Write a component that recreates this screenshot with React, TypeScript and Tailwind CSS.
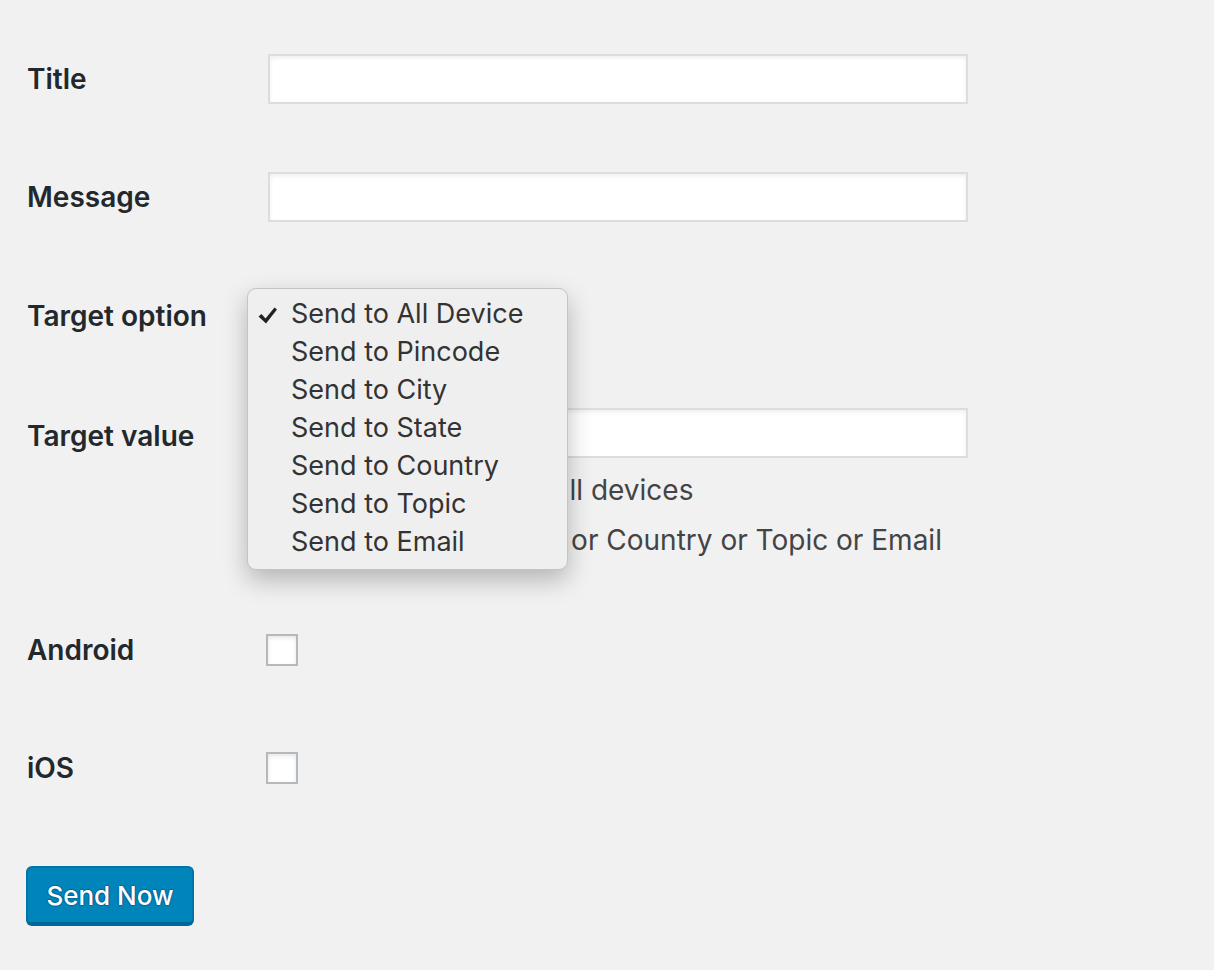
import React from "react";

const font = { fontFamily: "Inter, 'Noto Sans', sans-serif" };

function TextInput() {
  return (
    <div className="w-[700px] h-[50px] bg-white border-2 border-[#dddddd] shadow-[inset_0_2px_4px_rgba(0,0,0,0.07)]" />
  );
}

function Checkbox() {
  return (
    <div className="w-[32px] h-[32px] bg-white border-2 border-[#b4b9be] shadow-[inset_0_2px_4px_rgba(0,0,0,0.1)]" />
  );
}

const options = [
  "Send to All Device",
  "Send to Pincode",
  "Send to City",
  "Send to State",
  "Send to Country",
  "Send to Topic",
  "Send to Email",
];

function Label({ children }: { children: React.ReactNode }) {
  return (
    <div className="w-[241px] h-[50px] flex items-center text-[28px] font-semibold text-[#23282d]">
      {children}
    </div>
  );
}

export default function App() {
  return (
    <div className="min-h-[970px] bg-[#f1f1f1] pl-[27px] pt-[54px]" style={font}>
      <div className="flex">
        <Label>Title</Label>
        <TextInput />
      </div>
      <div className="flex mt-[68px]">
        <Label>Message</Label>
        <TextInput />
      </div>
      <div className="flex mt-[69px]">
        <Label>Target option</Label>
        <div className="relative">
          <div className="w-[290px] h-[50px] bg-white border-2 border-[#5b9dd9] rounded-[4px]" />
          <div className="absolute left-[-21px] top-[-3px] w-[321px] h-[282px] rounded-[9px] bg-[#efefef] border border-[#c4c4c4] shadow-[0_10px_24px_rgba(0,0,0,0.25)] pt-[6px] z-10">
            {options.map((o, i) => (
              <div key={o} className="relative h-[38px] flex items-center pl-[43px] text-[27px] text-[#333333]">
                {i === 0 && (
                  <svg className="absolute left-[10px] top-[12px]" width="20" height="17" viewBox="0 0 20 17">
                    <path d="M0.5 9.5 L3.5 7 L7.5 11.5 L16.5 0.5 L19 2.5 L8 16.5 Z" fill="#222222" />
                  </svg>
                )}
                {o}
              </div>
            ))}
          </div>
        </div>
      </div>
      <div className="flex mt-[67px]">
        <div className="w-[241px] h-[56px] flex items-center text-[28px] font-semibold text-[#23282d]">
          Target value
        </div>
        <div>
          <TextInput />
          <div className="mt-[7px] text-[28px] text-[#444444] leading-[50px]">
            <div>Leave blank to target all devices</div>
            <div>Pin code, City or State or Country or Topic or Email</div>
          </div>
        </div>
      </div>
      <div className="flex mt-[60px]">
        <Label>Android</Label>
        <div className="h-[50px] flex items-center -ml-[2px]">
          <Checkbox />
        </div>
      </div>
      <div className="flex mt-[68px]">
        <Label>iOS</Label>
        <div className="h-[50px] flex items-center -ml-[2px]">
          <Checkbox />
        </div>
      </div>
      <div className="mt-[73px]">
        <button className="-ml-[1px] w-[168px] h-[58px] rounded-[6px] bg-[#0085ba] border-2 border-[#0073aa] border-b-[#006799] shadow-[0_2px_0_#006799] text-white text-[26px] font-medium [text-shadow:0_-1px_1px_#006799,1px_0_1px_#006799,0_1px_1px_#006799,-1px_0_1px_#006799]">
          Send Now
        </button>
      </div>
    </div>
  );
}
